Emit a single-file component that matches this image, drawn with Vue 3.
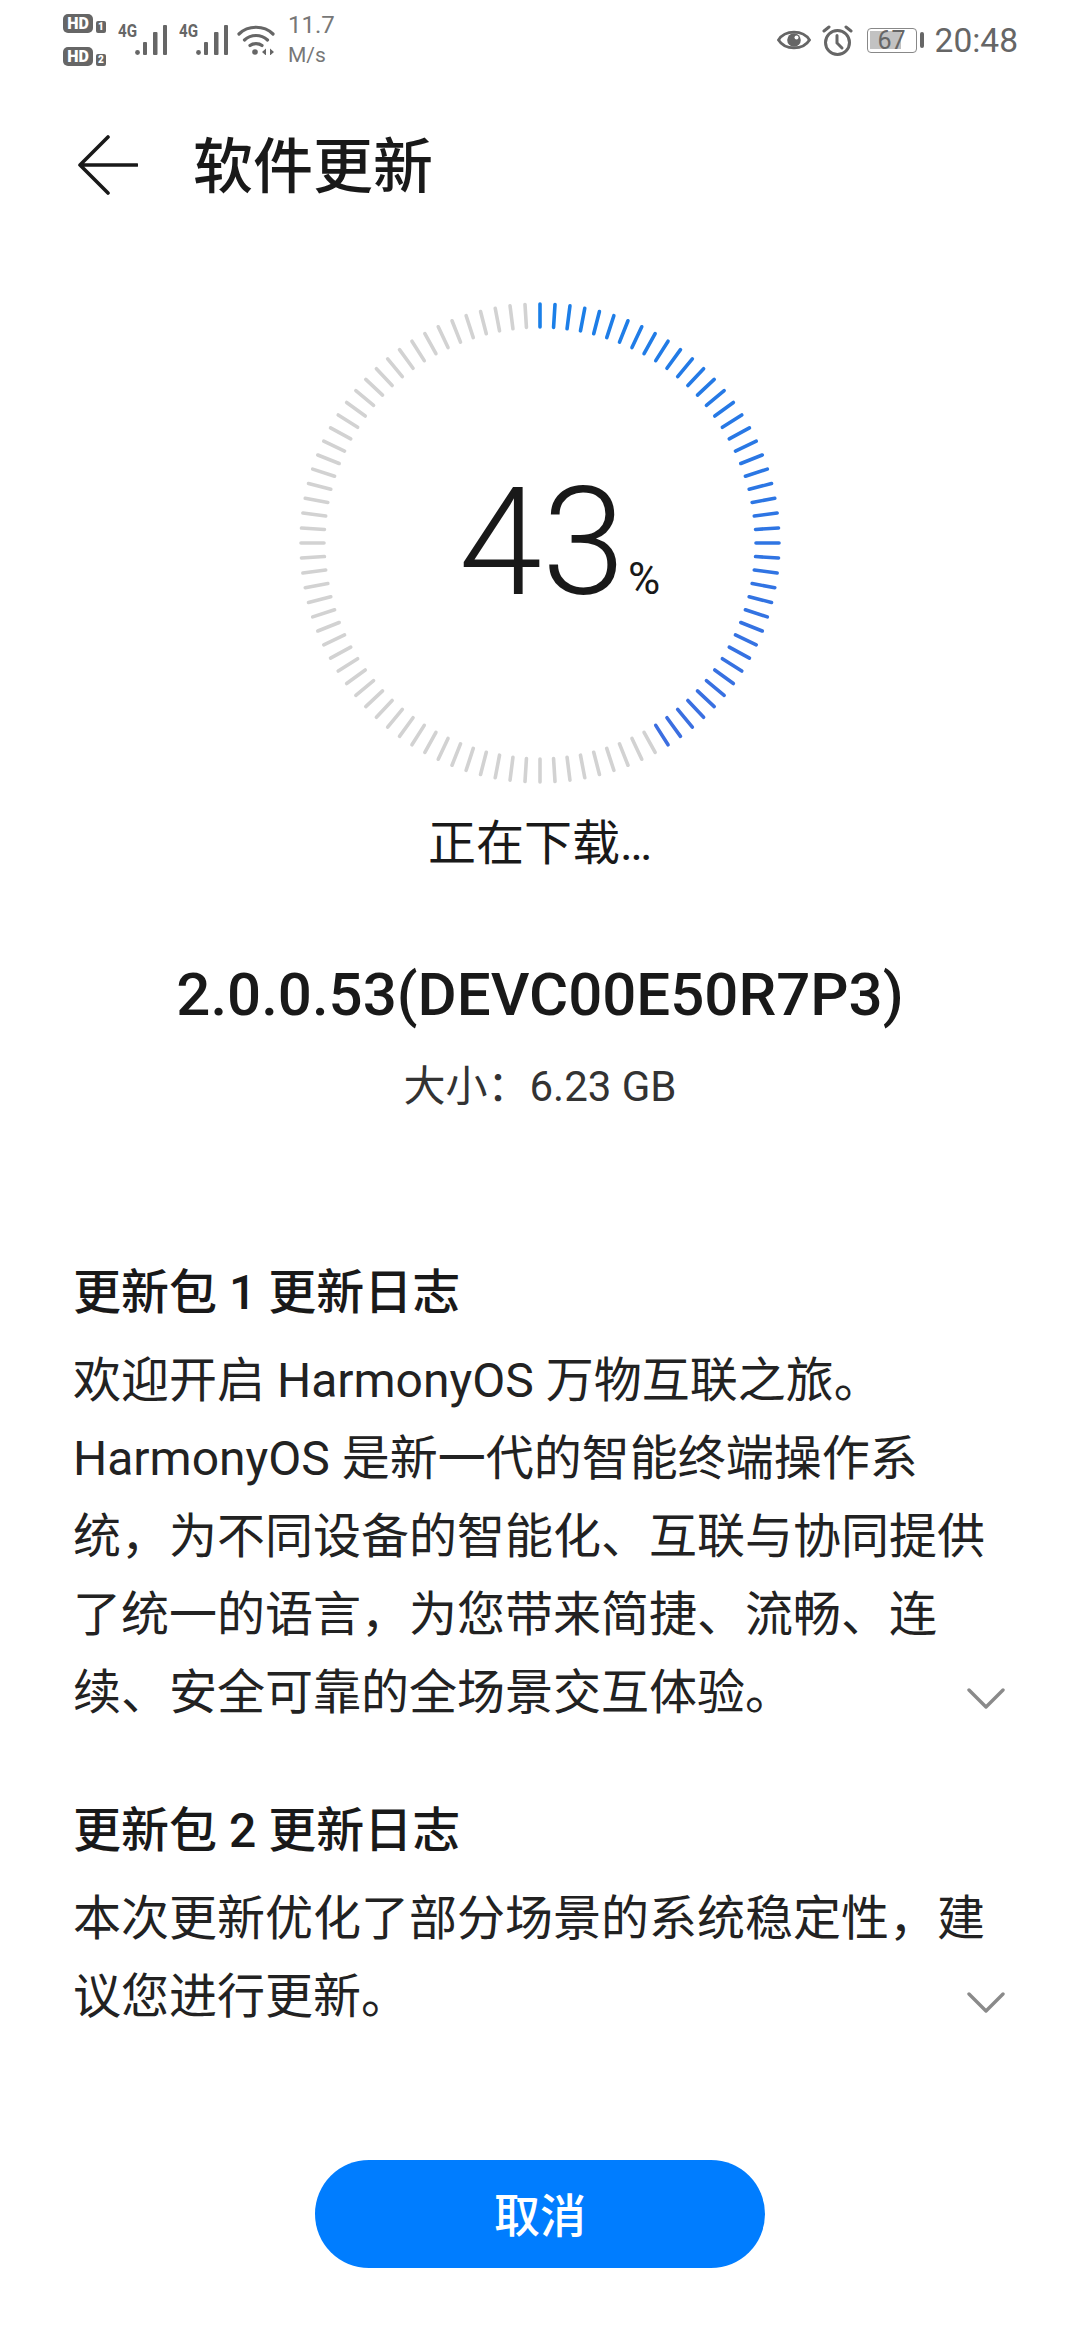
<template>
  <div class="page">
    <div class="status-bar">
      <div class="status-left">
        <div class="sims">
          <div class="sim"><span class="hd">HD</span><span class="sim-no">1</span></div>
          <div class="sim"><span class="hd">HD</span><span class="sim-no">2</span></div>
        </div>
        <div v-for="n in 2" :key="n" class="signal">
          <span class="net">4G</span>
          <svg width="32" height="30" viewBox="0 0 32 30" fill="#666">
            <circle cx="2.5" cy="27.5" r="2.4" />
            <rect x="8" y="17" width="4" height="13" rx="1" />
            <rect x="18" y="7" width="4.5" height="23" rx="1" />
            <rect x="28" y="0" width="4" height="30" rx="1" />
          </svg>
        </div>
        <svg class="wifi" width="38" height="30" viewBox="0 0 38 30" fill="none" stroke="#666" stroke-width="3.2" stroke-linecap="round">
          <path d="M2 9 C 11 0, 27 0, 36 9" />
          <path d="M7.5 15 C 14 9, 24 9, 30.5 15" />
          <path d="M13 20.5 C 16 18, 22 18, 25 20.5" />
          <circle cx="18" cy="27" r="2.8" fill="#666" stroke="none" />
          <path d="M25 27 l4 -3.5 v7 z M33 23.5 l4 3.5 l-4 3.5 z" fill="#666" stroke="none" />
        </svg>
        <div class="speed"><span>11.7</span><span class="unit">M/s</span></div>
      </div>
      <div class="status-right">
        <svg class="eye" width="34" height="24" viewBox="0 0 34 24">
          <path d="M1.5 12 C 8 1.5, 26 1.5, 32.5 12 C 26 22.5, 8 22.5, 1.5 12 Z" fill="none" stroke="#666" stroke-width="2.8" />
          <circle cx="17" cy="12" r="6.8" fill="#666" />
          <circle cx="19.5" cy="9.5" r="2" fill="#fff" />
        </svg>
        <svg class="alarm" width="31" height="31" viewBox="0 0 31 31" fill="none" stroke="#666" stroke-width="3" stroke-linecap="round">
          <circle cx="15.5" cy="17.5" r="12" />
          <path d="M15 10.5 v7.5 l5 5" />
          <path d="M2 6 L7 2 M29 6 L24 2" />
        </svg>
        <div class="battery">
          <div class="battery-body">
            <div class="battery-fill"></div>
            <span class="battery-num">67</span>
          </div>
          <div class="battery-cap"></div>
        </div>
        <span class="clock">20:48</span>
      </div>
    </div>

    <div class="title-bar">
      <svg class="back" width="60" height="60" viewBox="0 0 60 60" fill="none" stroke="#191919" stroke-width="3.6" stroke-linecap="round" stroke-linejoin="round">
        <path d="M30 2 L2 30 L30 58 M2 30 H59" />
      </svg>
      <h1 class="title">软件更新</h1>
    </div>

    <div class="ring-wrap">
      <svg class="ring" width="484" height="484" viewBox="-242 -242 484 484">
        <line
          v-for="t in ticks"
          :key="t.i"
          :x1="t.x1"
          :y1="t.y1"
          :x2="t.x2"
          :y2="t.y2"
          :stroke="t.color"
          stroke-width="3.6"
          stroke-linecap="round"
        />
      </svg>
      <div class="percent"><span class="num">43</span><span class="sign">%</span></div>
    </div>

    <p class="state">正在下载…</p>
    <p class="version">2.0.0.53(DEVC00E50R7P3)</p>
    <p class="size">大小：6.23 GB</p>

    <section v-for="log in logs" :key="log.title" class="log">
      <h2 class="log-title">{{ log.title }}</h2>
      <p class="log-text">{{ log.text }}</p>
      <svg class="chevron" width="38" height="22" viewBox="0 0 38 22" fill="none" stroke="#8a8a8a" stroke-width="3.4" stroke-linecap="round" stroke-linejoin="round">
        <path d="M2 2 L19 19 L36 2" />
      </svg>
    </section>

    <div class="footer">
      <button class="cancel">取消</button>
    </div>
  </div>
</template>

<script setup>
const logs = [
  {
    title: '更新包 1 更新日志',
    text: '欢迎开启 HarmonyOS 万物互联之旅。HarmonyOS 是新一代的智能终端操作系统，为不同设备的智能化、互联与协同提供了统一的语言，为您带来简捷、流畅、连续、安全可靠的全场景交互体验。'
  },
  {
    title: '更新包 2 更新日志',
    text: '本次更新优化了部分场景的系统稳定性，建议您进行更新。'
  }
]

// 100 根刻度，前 42 根为蓝色
const ticks = Array.from({ length: 100 }, (_, i) => {
  const a = (i * 3.6 * Math.PI) / 180
  const s = Math.sin(a)
  const c = Math.cos(a)
  const k = i / 41
  const color = i < 42
    ? `rgb(${Math.round(26 + 34 * k)},${Math.round(127 - 17 * k)},${Math.round(232 - 8 * k)})`
    : '#d2d2d2'
  return {
    i,
    x1: (216 * s).toFixed(2),
    y1: (-216 * c).toFixed(2),
    x2: (239 * s).toFixed(2),
    y2: (-239 * c).toFixed(2),
    color
  }
})
</script>

<style>
html, body {
  margin: 0;
  background: #fff;
}
</style>

<style scoped>
.page {
  width: 1080px;
  height: 2340px;
  overflow: hidden;
  background: #fff;
  color: #191919;
  font-family: Roboto, "Noto Sans CJK SC", sans-serif;
}

.status-bar {
  height: 80px;
  padding: 0 62px 0 63px;
  display: flex;
  justify-content: space-between;
  align-items: center;
  color: #666;
}

.status-left,
.status-right {
  display: flex;
  align-items: center;
}

.sims {
  display: flex;
  flex-direction: column;
  gap: 14px;
  margin-right: 12px;
}

.sim {
  display: flex;
  align-items: flex-end;
  gap: 3px;
}

.hd {
  width: 30px;
  height: 19px;
  background: #666;
  border-radius: 5px;
  color: #fff;
  font-size: 16px;
  font-weight: 900;
  line-height: 19px;
  text-align: center;
}

.sim-no {
  width: 10px;
  height: 11px;
  padding-top: 1px;
  background: #666;
  border-radius: 2px;
  color: #fff;
  font-size: 10px;
  font-weight: 900;
  line-height: 10px;
  text-align: center;
}

.signal {
  display: flex;
  align-items: flex-start;
  height: 30px;
  margin-right: 12px;
}

.net {
  width: 17px;
  font-size: 19px;
  font-weight: 700;
  line-height: 14px;
  white-space: nowrap;
  transform: scaleX(0.8);
  transform-origin: left center;
  margin-top: -1px;
}

.wifi {
  margin-left: -3px;
  margin-right: 13px;
}

.speed {
  display: flex;
  flex-direction: column;
  font-size: 24px;
  line-height: 30px;
  color: #777;
}

.unit {
  font-size: 21px;
}

.eye {
  margin-right: 11px;
}

.alarm {
  margin-right: 14px;
}

.battery {
  display: flex;
  align-items: center;
  gap: 3px;
  margin-right: 11px;
}

.battery-body {
  position: relative;
  width: 48px;
  height: 23px;
  border: 1.5px solid #888;
  border-radius: 4px;
}

.battery-fill {
  width: 31px;
  height: 18px;
  margin: 2.5px;
  background: #c2c2c2;
}

.battery-num {
  position: absolute;
  left: 10px;
  top: 0;
  font-size: 25px;
  line-height: 23px;
  color: #666;
}

.battery-cap {
  width: 4px;
  height: 16px;
  background: #666;
  border-radius: 2px;
}

.clock {
  font-size: 33.5px;
  color: #666;
}

.title-bar {
  height: 170px;
  padding-left: 78px;
  display: flex;
  align-items: center;
}

.title {
  margin: 6px 0 0 55px;
  font-size: 60px;
  font-weight: 500;
  line-height: 80px;
}

.ring-wrap {
  position: relative;
  width: 484px;
  height: 484px;
  margin: 51px auto 0;
  display: flex;
  align-items: center;
  justify-content: center;
}

.ring {
  position: absolute;
  inset: 0;
}

.percent {
  display: flex;
  align-items: baseline;
}

.num {
  font-size: 150px;
  font-weight: 300;
  line-height: 1;
}

.sign {
  font-size: 44px;
  font-weight: 400;
  margin-left: 3px;
  margin-right: -39px;
}

.state,
.version,
.size {
  margin: 0;
  text-align: center;
}

.state {
  margin-top: 29px;
  font-size: 48px;
  line-height: 60px;
}

.version {
  margin-top: 81px;
  font-size: 60px;
  font-weight: 500;
  line-height: 80px;
}

.size {
  margin-top: 22px;
  font-size: 42px;
  line-height: 60px;
  color: #333;
}

.log {
  position: relative;
  padding: 0 73px;
  margin-top: 69px;
}

.size + .log {
  margin-top: 146px;
}

.log-title {
  margin: 0 0 19px;
  font-size: 48px;
  font-weight: 500;
  line-height: 60px;
}

.log-text {
  width: 934px;
  margin: 0;
  font-size: 48px;
  line-height: 78px;
  color: #222;
}

.chevron {
  position: absolute;
  right: 75px;
  bottom: 22px;
}

.footer {
  margin-top: 124px;
  display: flex;
  justify-content: center;
}

.cancel {
  width: 450px;
  height: 108px;
  padding: 0 0 4px;
  border: none;
  border-radius: 54px;
  background: #007dff;
  color: #fff;
  font-family: inherit;
  font-size: 46px;
  font-weight: 500;
}
</style>
